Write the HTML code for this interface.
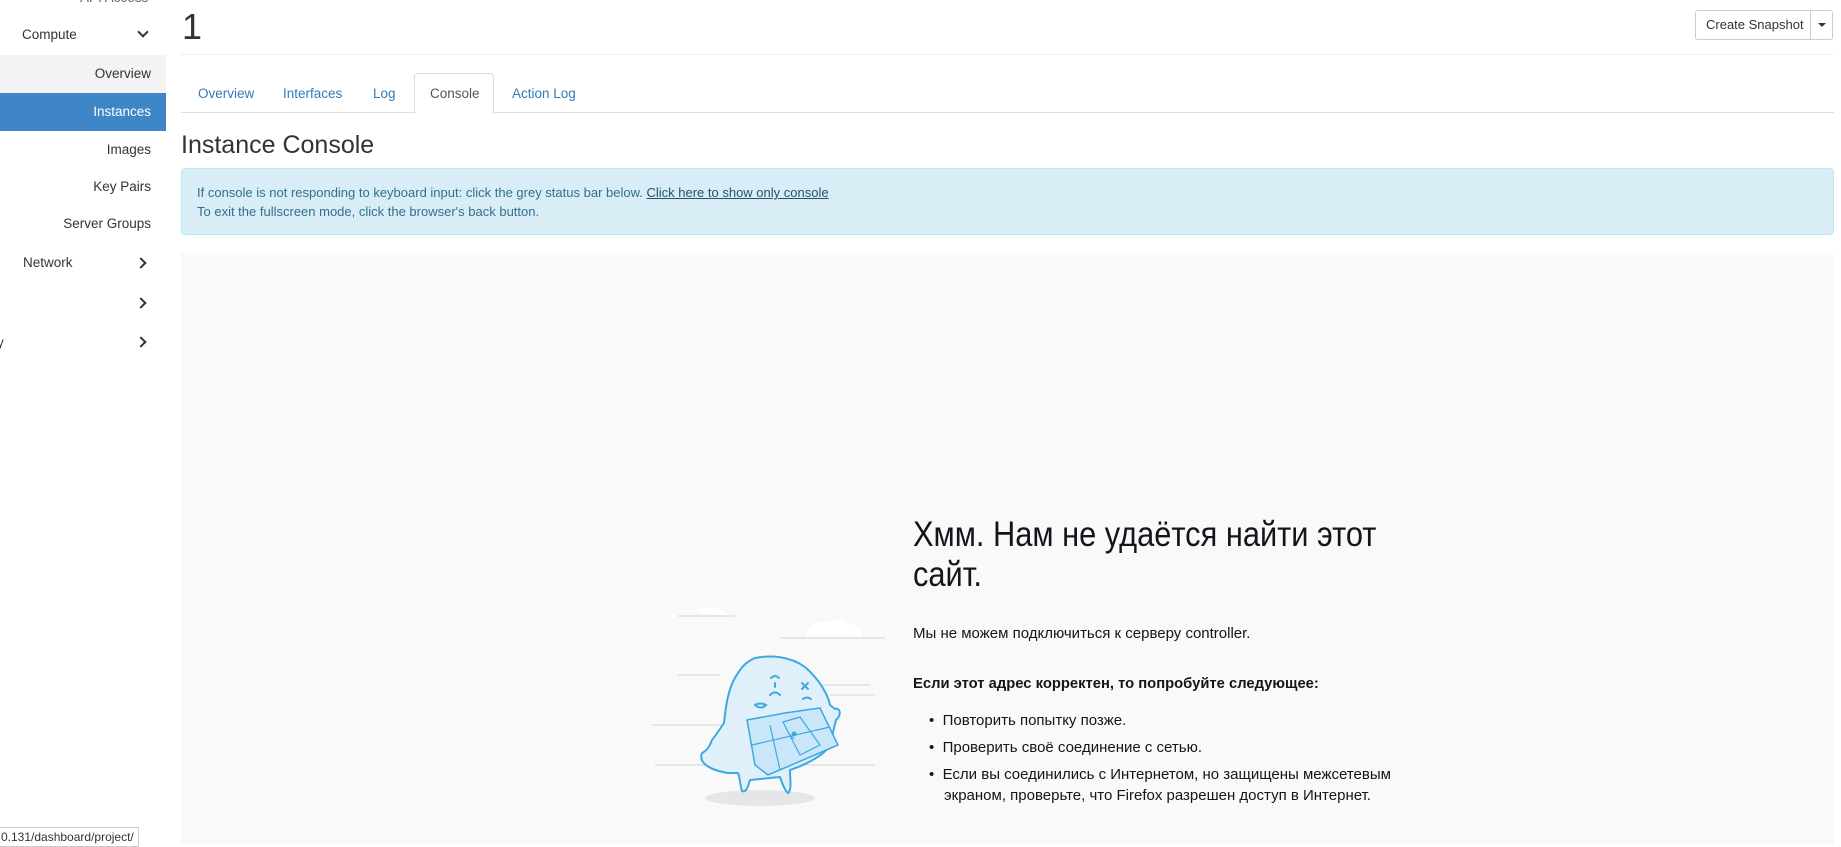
<!DOCTYPE html>
<html><head><meta charset="utf-8">
<style>
*{margin:0;padding:0;box-sizing:border-box}
body{width:1841px;height:844px;overflow:hidden;background:#fff;font-family:"Liberation Sans",Arial,sans-serif;color:#333;position:relative}
.abs{position:absolute;white-space:nowrap}
.side{font-size:13.5px;color:#333}
.chev{position:absolute;width:8px;height:8px;border-right:2.5px solid #333;border-bottom:2.5px solid #333}
.tab{position:absolute;top:86px;font-size:13.5px;color:#337ab7}
.ff{font-family:"Liberation Sans","DejaVu Sans",sans-serif;color:#15141a}
</style></head><body>
<div class="abs side" style="left:80px;top:-10px;color:#666">API Access</div>
<div class="abs side" style="left:22px;top:27px">Compute</div>
<div class="chev" style="left:139px;top:28px;transform:rotate(45deg)"></div>
<div class="abs" style="left:0;top:55px;width:166px;height:38px;background:#f3f3f3"></div>
<div class="abs side" style="right:1690px;top:66px">Overview</div>
<div class="abs" style="left:0;top:93px;width:166px;height:38px;background:#3f86c8"></div>
<div class="abs side" style="right:1690px;top:104px;color:#fff">Instances</div>
<div class="abs side" style="right:1690px;top:142px">Images</div>
<div class="abs side" style="right:1690px;top:179px">Key Pairs</div>
<div class="abs side" style="right:1690px;top:216px">Server Groups</div>
<div class="abs side" style="left:23px;top:255px">Network</div>
<div class="chev" style="left:137px;top:259px;transform:rotate(-45deg)"></div>
<div class="chev" style="left:137px;top:299px;transform:rotate(-45deg)"></div>
<div class="abs side" style="left:-3px;top:335px">y</div>
<div class="chev" style="left:137px;top:338px;transform:rotate(-45deg)"></div>

<div class="abs" style="left:182px;top:6px;font-size:36px;color:#333">1</div>
<div class="abs" style="left:1695px;top:10px;width:138px;height:30px;border:1px solid #ccc;border-radius:3px;background:#fff"></div>
<div class="abs" style="left:1810px;top:10px;width:1px;height:30px;background:#ccc"></div>
<div class="abs" style="left:1706px;top:17px;font-size:13px;color:#333">Create Snapshot</div>
<div class="abs" style="left:1818px;top:23px;width:0;height:0;border-left:4px solid transparent;border-right:4px solid transparent;border-top:4px solid #333"></div>
<div class="abs" style="left:181px;top:54px;width:1653px;height:1px;background:#eee"></div>

<div class="abs" style="left:181px;top:112px;width:1653px;height:1px;background:#ddd"></div>
<div class="abs" style="left:414px;top:73px;width:80px;height:41px;background:#fff;border:1px solid #ddd;border-bottom:none;border-radius:4px 4px 0 0"></div>
<div class="tab" style="left:198px">Overview</div>
<div class="tab" style="left:283px">Interfaces</div>
<div class="tab" style="left:373px">Log</div>
<div class="tab" style="left:430px;color:#555">Console</div>
<div class="tab" style="left:512px">Action Log</div>

<div class="abs" style="left:181px;top:131px;font-size:25px;color:#333">Instance Console</div>
<div class="abs" style="left:181px;top:168px;width:1653px;height:67px;background:#d9edf7;border:1px solid #bce8f1;border-radius:4px"></div>
<div class="abs" style="left:197px;top:183px;font-size:13px;color:#31708f;line-height:19px">If console is not responding to keyboard input: click the grey status bar below. <u style="color:#245269">Click here to show only console</u><br>To exit the fullscreen mode, click the browser's back button.</div>

<div class="abs" style="left:181px;top:253px;width:1653px;height:591px;background:#f9f9fa"></div>
<div class="abs ff" style="left:913px;top:515px;font-size:35px;line-height:40px;transform:scaleX(0.88);transform-origin:0 0">Хмм. Нам не удаётся найти этот<br>сайт.</div>
<div class="abs ff" style="left:913px;top:625px;font-size:15px">Мы не можем подключиться к серверу controller.</div>
<div class="abs ff" style="left:913px;top:675px;font-size:15px;font-weight:bold;transform:scaleX(0.985);transform-origin:0 0">Если этот адрес корректен, то попробуйте следующее:</div>
<div class="abs ff" style="left:929px;top:707px;font-size:15px;line-height:27px">• &nbsp;Повторить попытку позже.<br>• &nbsp;Проверить своё соединение с сетью.</div>
<div class="abs ff" style="left:929px;top:764px;font-size:15px;line-height:21px">• &nbsp;Если вы соединились с Интернетом, но защищены межсетевым</div>
<div class="abs ff" style="left:944px;top:785px;font-size:15px;line-height:21px">экраном, проверьте, что Firefox разрешен доступ в Интернет.</div>

<svg class="abs" style="left:640px;top:595px" width="250" height="215" viewBox="0 0 250 215">
<g stroke="#e0e0e2" stroke-width="1.5">
<line x1="38" y1="21" x2="95" y2="21"/><line x1="140" y1="43" x2="245" y2="43"/>
<line x1="38" y1="80" x2="80" y2="80"/><line x1="180" y1="90" x2="230" y2="90"/>
<line x1="190" y1="100" x2="235" y2="100"/><line x1="12" y1="130" x2="85" y2="130"/>
<line x1="15" y1="170" x2="235" y2="170"/>
</g>
<path d="M55 18 q5-9 12-4 q6-6 12 1 q6 0 8 5 z" fill="#fff"/>
<path d="M165 42 q3-18 22-14 q10-8 22 2 q10-3 14 12 z" fill="#fff"/>
<ellipse cx="120" cy="203" rx="55" ry="8" fill="#e6e6e9"/>
<path d="M88 178 C70 175 58 168 62 158 C68 155 70 150 72 145 C76 140 80 134 84 128 C86 110 88 92 98 78 C103 70 108 66 115 63 C130 60 150 61 165 72 C180 85 188 100 190 110 L195 114 C200 112 202 120 196 125 L190 150 C185 160 165 170 150 175 C150 185 152 195 148 198 C145 196 142 188 140 182 L110 185 C108 192 106 198 102 196 C100 190 100 182 98 178 Z" fill="#dff0fb" stroke="#3da9e0" stroke-width="2" stroke-linejoin="round"/>
<path d="M107 125 L145 118 L180 113 L198 150 L170 162 L128 180 L115 170 Z" fill="#c9e7f8" stroke="#3da9e0" stroke-width="1.5"/>
<path d="M143 127 L160 122 L180 150 L160 160 Z M150 140 l4 4 M130 130 L140 175 M112 150 L190 132" fill="none" stroke="#3da9e0" stroke-width="1.2"/>
<circle cx="154" cy="139" r="2.5" fill="#3da9e0"/>
<g fill="none" stroke="#3da9e0" stroke-width="2" stroke-linecap="round">
<path d="M131 83 q4-4 8 0"/><path d="M135 88 v4"/><path d="M130 100 q5-5 10 0"/>
<path d="M162 88 l6 6 M168 88 l-6 6"/><path d="M163 104 q4-3 8 0"/>
<path d="M115 110 q5-3 11 0 q-5 5 -11 0"/>
</g>
</svg>

<div class="abs" style="left:-2px;top:827px;width:141px;height:20px;background:#fff;border:1px solid #ccc;font-size:12px;color:#333;padding:2px 0 0 2px">0.131/dashboard/project/</div>
</body></html>
